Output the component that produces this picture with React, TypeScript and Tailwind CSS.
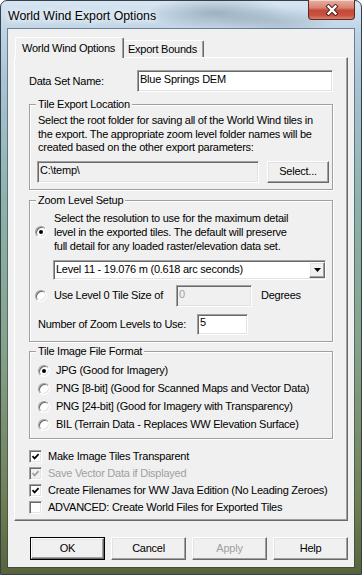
import React from "react";

const sunken =
  "border border-t-[#a0a0a0] border-l-[#a0a0a0] border-r-white border-b-white shadow-[inset_1px_1px_0_#696969,inset_-1px_-1px_0_#e3e3e3]";
const raised =
  "border border-t-white border-l-white border-r-[#696969] border-b-[#696969] shadow-[inset_-1px_-1px_0_#a0a0a0,inset_1px_1px_0_#e3e3e3]";

function Radio({ checked }: { checked?: boolean }) {
  return (
    <div className="w-[12px] h-[12px] shrink-0 rounded-full border border-t-[#a0a0a0] border-l-[#a0a0a0] border-r-white border-b-white bg-white shadow-[inset_1px_1px_0_#696969,inset_-1px_-1px_0_#e3e3e3] flex items-center justify-center">
      {checked && <div className="w-[4px] h-[4px] rounded-full bg-black" />}
    </div>
  );
}

function Check({ checked, disabled }: { checked?: boolean; disabled?: boolean }) {
  return (
    <div
      className={
        "w-[13px] h-[13px] shrink-0 flex items-center justify-center " +
        sunken +
        (disabled ? " bg-[#f0f0f0]" : " bg-white")
      }
    >
      {checked && (
        <svg width="9" height="9" viewBox="0 0 9 9">
          <path
            d="M1.5 4.2 L3.6 6.4 L7.6 2.2"
            fill="none"
            stroke={disabled ? "#a0a0a0" : "#000"}
            strokeWidth="1.7"
          />
        </svg>
      )}
    </div>
  );
}

function Btn({
  label,
  def,
  disabled,
}: {
  label: string;
  def?: boolean;
  disabled?: boolean;
}) {
  if (def) {
    return (
      <div className="w-[75px] h-[23px] border border-black flex">
        <div className={"flex-1 flex items-center justify-center " + raised}>
          {label}
        </div>
      </div>
    );
  }
  return (
    <div
      className={
        "w-[75px] h-[23px] flex items-center justify-center " +
        raised +
        (disabled ? " text-[#a0a0a0]" : "")
      }
    >
      {label}
    </div>
  );
}

function Group({
  title,
  className,
  children,
}: {
  title: string;
  className: string;
  children: React.ReactNode;
}) {
  return (
    <fieldset
      className={
        "border border-[#a0a0a0] shadow-[inset_1px_1px_0_#fff,1px_1px_0_#fff] min-w-0 " +
        className
      }
    >
      <legend className="-ml-[2px] px-[2px] bg-[#f0f0f0] leading-[13px]">
        {title}
      </legend>
      {children}
    </fieldset>
  );
}

export default function App() {
  return (
    <div className="w-[362px] h-[575px] bg-white [font-family:'Liberation_Sans',Arial,sans-serif] text-[11px] leading-[13px] tracking-[-0.25px] text-black">
      <div className="w-full h-full rounded-t-[7px] border border-[#34404c] flex flex-col [background-image:radial-gradient(ellipse_70px_16px_at_215px_12px,rgba(70,90,110,0.35),transparent),radial-gradient(ellipse_60px_14px_at_275px_20px,rgba(90,110,130,0.25),transparent),linear-gradient(180deg,#d6e5f1_0%,#c0d5e6_5%,#a9c3d3_14%,#8db2aa_35%,#86a389_60%,#6f7e4f_88%,#59633a_100%)]">
        {/* title bar */}
        <div className="h-[28px] flex items-center justify-between pl-[7px] shrink-0">
          <div className="text-[12.3px] tracking-normal leading-[16px] [text-shadow:0_0_6px_#ffffff,0_0_10px_#ffffff] mt-[1px]">
            World Wind Export Options
          </div>
          <div className="self-start -mt-[1px] mr-[6px] w-[47px] h-[20px] rounded-b-[4px] border border-[#5b2a25] border-t-0 flex items-center justify-center [background-image:linear-gradient(180deg,#e8b0a2_0%,#d88573_40%,#c4483a_55%,#c9503f_80%,#d8836a_100%)] shadow-[inset_0_1px_0_rgba(255,255,255,0.5)]">
            <svg width="14" height="12" viewBox="0 0 14 12">
              <path
                d="M3.5 2.5 L10.5 9.5 M10.5 2.5 L3.5 9.5"
                stroke="#4a1c18"
                strokeWidth="4.2"
                strokeLinecap="square"
              />
              <path
                d="M3.5 2.5 L10.5 9.5 M10.5 2.5 L3.5 9.5"
                stroke="#ffffff"
                strokeWidth="2.4"
                strokeLinecap="square"
              />
            </svg>
          </div>
        </div>

        {/* client */}
        <div className="flex-1 mx-[7px] mb-[7px] bg-[#f0f0f0] shadow-[0_0_0_1px_rgba(40,60,80,0.55)] flex flex-col px-[6px] pt-[8px]">
          {/* tabs */}
          <div className="h-[20px] flex items-end pl-[1px] relative z-10">
            <div className="w-[109px] h-[21px] -mb-[1px] bg-[#f0f0f0] border-t border-l border-r border-t-white border-l-white border-r-[#696969] shadow-[inset_-1px_0_0_#a0a0a0] rounded-t-[2px] flex items-center pl-[6px]">
              World Wind Options
            </div>
            <div className="w-[80px] h-[17px] border-t border-r border-t-white border-r-[#696969] shadow-[inset_-1px_0_0_#a0a0a0] rounded-tr-[2px] flex items-center pl-[4px]">
              Export Bounds
            </div>
          </div>

          {/* panel */}
          <div className="h-[464px] border border-t-white border-l-white border-r-[#696969] border-b-[#696969] shadow-[inset_-1px_-1px_0_#a0a0a0] px-[14px] flex flex-col">
            <div className="mt-[12px] h-[22px] flex items-center">
              <div className="w-[108px]">Data Set Name:</div>
              <div className={"w-[196px] h-[22px] bg-white pl-[2px] pt-[2px] " + sunken}>
                Blue Springs DEM
              </div>
            </div>

            <Group title="Tile Export Location" className="mt-[6px] pl-[8px] pr-[3px] pb-[6px]">
              <div className="mt-[3px] leading-[13.5px] whitespace-nowrap">
                Select the root folder for saving all of the World Wind tiles in
                <br />
                the export. The appropriate zoom level folder names will be
                <br />
                created based on the other export parameters:
              </div>
              <div className="mt-[6px] -ml-px flex justify-between">
                <div className={"w-[222px] h-[22px] bg-[#f0f0f0] pl-[2px] pt-[2px] " + sunken}>
                  C:\temp\
                </div>
                <div className={"w-[62px] h-[22px] flex items-center justify-center " + raised}>
                  Select...
                </div>
              </div>
            </Group>

            <Group title="Zoom Level Setup" className="mt-[4px] pl-[8px] pr-[6px] pb-[6px]">
              <div className="mt-[4px] flex items-center gap-[7px] -ml-[3px]">
                <Radio checked />
                <div className="leading-[14px] whitespace-nowrap">
                  Select the resolution to use for the maximum detail
                  <br />
                  level in the exported tiles. The default will preserve
                  <br />
                  full detail for any loaded raster/elevation data set.
                </div>
              </div>
              <div className={"mt-[7px] ml-[15px] h-[20px] bg-white flex items-center justify-between " + sunken}>
                <div className="pl-[2px] whitespace-nowrap">
                  Level 11 - 19.076 m (0.618 arc seconds)
                </div>
                <div className={"w-[16px] h-[16px] bg-[#f0f0f0] flex items-center justify-center " + raised}>
                  <svg width="7" height="4" viewBox="0 0 7 4">
                    <path d="M0 0 H7 L3.5 4 Z" fill="#000" />
                  </svg>
                </div>
              </div>
              <div className="mt-[5px] h-[22px] flex items-center -ml-[3px]">
                <Radio />
                <div className="ml-[7px] w-[122px] whitespace-nowrap">
                  Use Level 0 Tile Size of
                </div>
                <div className={"w-[76px] h-[22px] bg-[#f0f0f0] text-[#a0a0a0] pl-[2px] pt-[2px] " + sunken}>
                  0
                </div>
                <div className="ml-[9px]">Degrees</div>
              </div>
              <div className="mt-[7px] h-[21px] flex items-center">
                <div className="w-[159px] whitespace-nowrap">
                  Number of Zoom Levels to Use:
                </div>
                <div className={"w-[51px] h-[21px] bg-white pl-[2px] pt-[1px] " + sunken}>
                  5
                </div>
              </div>
            </Group>

            <Group title="Tile Image File Format" className="mt-[3px] pl-[8px] pr-[6px] pb-[4px]">
              <div className="mt-[4px] flex flex-col">
                {[
                  ["JPG (Good for Imagery)", true],
                  ["PNG [8-bit] (Good for Scanned Maps and Vector Data)", false],
                  ["PNG [24-bit] (Good for Imagery with Transparency)", false],
                  ["BIL (Terrain Data - Replaces WW Elevation Surface)", false],
                ].map(([t, c]) => (
                  <div key={t as string} className="h-[18px] flex items-center gap-[6px]">
                    <Radio checked={c as boolean} />
                    <div className="whitespace-nowrap">{t as string}</div>
                  </div>
                ))}
              </div>
            </Group>

            <div className="mt-[9px] flex flex-col">
              <div className="h-[17px] flex items-center gap-[6px]">
                <Check checked />
                <div>Make Image Tiles Transparent</div>
              </div>
              <div className="h-[17px] flex items-center gap-[6px]">
                <Check checked disabled />
                <div className="text-[#a0a0a0]">Save Vector Data if Displayed</div>
              </div>
              <div className="h-[17px] flex items-center gap-[6px]">
                <Check checked />
                <div className="whitespace-nowrap">
                  Create Filenames for WW Java Edition (No Leading Zeroes)
                </div>
              </div>
              <div className="h-[17px] flex items-center gap-[6px]">
                <Check />
                <div className="whitespace-nowrap">
                  ADVANCED: Create World Files for Exported Tiles
                </div>
              </div>
            </div>
          </div>

          {/* buttons */}
          <div className="mt-[16px] flex justify-end gap-[6px]">
            <Btn label="OK" def />
            <Btn label="Cancel" />
            <Btn label="Apply" disabled />
            <Btn label="Help" />
          </div>
        </div>
      </div>
    </div>
  );
}
